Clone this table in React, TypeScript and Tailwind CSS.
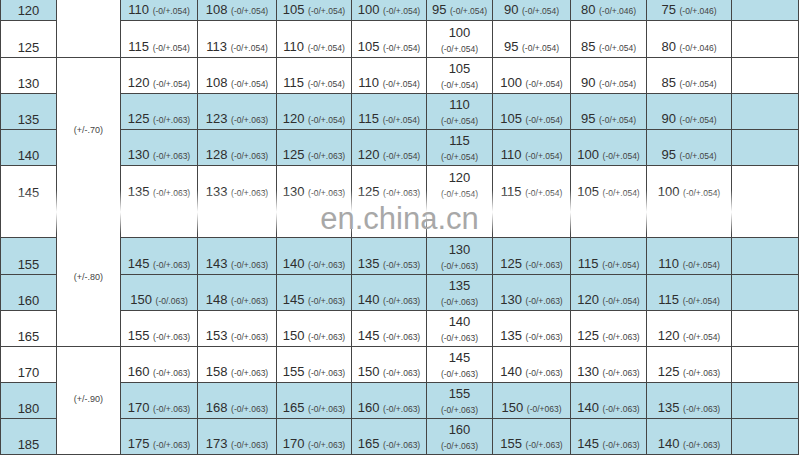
import { Fragment } from "react";

type Row = {
  size: string;
  blue: boolean;
  tall?: boolean;
  stacked: boolean;
  cells: [string, string][];
};

const a = "(-0/+.054)";
const b = "(-0/+.063)";
const c = "(-0/+.046)";

// one entry per table row, cells are columns 3..10
const rows: Row[] = [
  { size: "120", blue: true, stacked: false, cells: [["110", a], ["108", a], ["105", a], ["100", a], ["95", a], ["90", a], ["80", c], ["75", c]] },
  { size: "125", blue: false, stacked: true, cells: [["115", a], ["113", a], ["110", a], ["105", a], ["100", a], ["95", a], ["85", a], ["80", c]] },
  { size: "130", blue: false, stacked: true, cells: [["120", a], ["108", a], ["115", a], ["110", a], ["105", a], ["100", a], ["90", a], ["85", a]] },
  { size: "135", blue: true, stacked: true, cells: [["125", b], ["123", b], ["120", a], ["115", a], ["110", a], ["105", a], ["95", a], ["90", a]] },
  { size: "140", blue: true, stacked: true, cells: [["130", b], ["128", b], ["125", b], ["120", a], ["115", a], ["110", a], ["100", a], ["95", a]] },
  { size: "145", blue: false, tall: true, stacked: true, cells: [["135", b], ["133", b], ["130", b], ["125", b], ["120", a], ["115", a], ["105", a], ["100", a]] },
  { size: "155", blue: true, stacked: true, cells: [["145", b], ["143", b], ["140", b], ["135", "(-0/+.053)"], ["130", b], ["125", b], ["115", a], ["110", a]] },
  { size: "160", blue: true, stacked: true, cells: [["150", "(-0/.063)"], ["148", b], ["145", b], ["140", b], ["135", b], ["130", b], ["120", a], ["115", a]] },
  { size: "165", blue: false, stacked: true, cells: [["155", b], ["153", b], ["150", b], ["145", b], ["140", b], ["135", b], ["125", b], ["120", a]] },
  { size: "170", blue: false, stacked: true, cells: [["160", b], ["158", b], ["155", b], ["150", b], ["145", b], ["140", b], ["130", b], ["125", b]] },
  { size: "180", blue: true, stacked: true, cells: [["170", b], ["168", b], ["165", b], ["160", b], ["155", b], ["150", "(-0/+063)"], ["140", b], ["135", b]] },
  { size: "185", blue: true, stacked: true, cells: [["175", b], ["173", b], ["170", b], ["165", b], ["160", b], ["155", b], ["145", b], ["140", b]] },
];

const Cell = ({ main, tol, stack, blue, tall }: { main: string; tol: string; stack: boolean; blue: boolean; tall?: boolean }) => (
  <div
    className={`flex flex-col items-center justify-end border-r border-b border-[#454545] ${blue ? "bg-[#b7dde8]" : "bg-white"} ${tall ? "pb-[37px]" : "pb-[2px]"}`}
  >
    {stack ? (
      <>
        <span className="text-[13px] leading-[14px] text-[#2e2e2e]">{main}</span>
        <span className="mt-[3px] text-[8.5px] leading-[12px] text-[#444]">{tol}</span>
      </>
    ) : (
      <span className="text-[13px] leading-[14px] text-[#2e2e2e] whitespace-nowrap">
        {main} <span className="text-[8.5px] text-[#444]">{tol}</span>
      </span>
    )}
  </div>
);

const App = () => {
  return (
    <div className="w-[800px] h-[458px] bg-white overflow-hidden" style={{ fontFamily: '"Liberation Sans", Arial, sans-serif' }}>
      <div className="relative w-[798px] border-l border-[#454545] grid grid-cols-[56px_64px_77px_79px_75px_75px_66px_78px_76px_85px_67px] grid-rows-[21px_37px_36px_36px_36px_72px_37px_36px_36px_36px_36px_36px]">
        {/* merged tolerance column */}
        <div className="col-start-2 row-start-1 row-span-2 bg-white border-r border-b border-[#454545]" />
        <div className="col-start-2 row-start-3 row-span-4 bg-white border-r border-[#454545] flex justify-center pt-[66px]">
          <span className="text-[9px] leading-[12px] text-[#444]">(+/-.70)</span>
        </div>
        <div className="col-start-2 row-start-7 row-span-3 bg-white border-r border-b border-[#454545] flex justify-center pt-[33px]">
          <span className="text-[9px] leading-[12px] text-[#444]">(+/-.80)</span>
        </div>
        <div className="col-start-2 row-start-10 row-span-3 bg-white border-r border-b border-[#454545] flex justify-center pt-[46px]">
          <span className="text-[9px] leading-[12px] text-[#444]">(+/-.90)</span>
        </div>

        {rows.map((row) => (
          <Fragment key={row.size}>
            <div
              className={`flex items-end justify-center border-r border-b border-[#454545] ${row.blue ? "bg-[#b7dde8]" : "bg-white"} ${row.tall ? "pb-[37px]" : "pb-[2px]"}`}
            >
              <span className="text-[13px] leading-[14px] text-[#2e2e2e]">{row.size}</span>
            </div>
            {row.cells.map(([main, tol], i) => (
              <Cell key={i} main={main} tol={tol} stack={row.stacked && i === 4} blue={row.blue} tall={row.tall} />
            ))}
            <div className={`border-r border-b border-[#454545] ${row.blue ? "bg-[#b7dde8]" : "bg-white"}`} />
          </Fragment>
        ))}

        {/* watermark band */}
        <div className="absolute left-0 right-0 top-[190px] h-[44px] bg-linear-to-b from-white/0 via-white to-white/0" />
        <div className="absolute left-0 right-0 top-[201px] text-center text-[31px] leading-[36px] text-[#a8a8a8]">
          en.china.cn
        </div>
      </div>
    </div>
  );
};

export default App;
